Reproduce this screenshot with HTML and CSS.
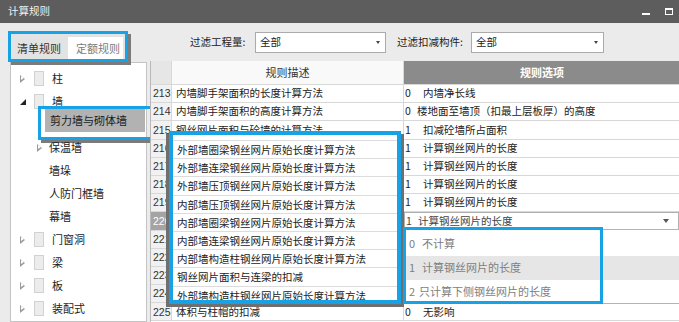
FILE: index.html
```html
<!DOCTYPE html>
<html lang="zh-CN">
<head>
  <meta charset="UTF-8" />
  <title>计算规则</title>
  <link rel="stylesheet" href="styles.css">
</head>
<body>

<div class="window">
  <header class="titlebar">
    <span class="title">计算规则</span>
    <span class="win-btns">
      <span class="btn-min"></span>
      <span class="btn-max"></span>
    </span>
  </header>

  <div class="content">
    <aside class="side">
      <div class="tabs">
        <span class="tab">清单规则</span>
        <span class="tab active">定额规则</span>
      </div>
      <ul class="tree">
        <li class="node"><i class="exp"></i><i class="doc"></i>柱</li>
        <li class="node"><i class="exp open"></i><i class="doc"></i>墙</li>
        <li class="node child selected"><span class="label">剪力墙与砌体墙</span></li>
        <li class="node child"><i class="exp"></i>保温墙</li>
        <li class="node child"><i class="exp none"></i>墙垛</li>
        <li class="node child"><i class="exp none"></i>人防门框墙</li>
        <li class="node child"><i class="exp none"></i>幕墙</li>
        <li class="node"><i class="exp"></i><i class="doc"></i>门窗洞</li>
        <li class="node"><i class="exp"></i><i class="doc"></i>梁</li>
        <li class="node"><i class="exp"></i><i class="doc"></i>板</li>
        <li class="node"><i class="exp"></i><i class="doc"></i>装配式</li>
      </ul>
    </aside>

    <section class="main">
      <div class="filters">
        <label class="f-label">过滤工程量:</label>
        <div class="combo combo-qty"><span>全部</span><i class="arrow"></i></div>
        <label class="f-label f-label2">过滤扣减构件:</label>
        <div class="combo combo-part"><span>全部</span><i class="arrow"></i></div>
      </div>

      <div class="grid">
        <div class="row head">
          <div class="cell num"></div>
          <div class="cell desc">规则描述</div>
          <div class="cell opt">规则选项</div>
        </div>
        <div class="row"><div class="cell num">213</div><div class="cell desc">内墙脚手架面积的长度计算方法</div><div class="cell opt"><span class="code">0</span>内墙净长线</div></div>
        <div class="row"><div class="cell num">214</div><div class="cell desc">内墙脚手架面积的高度计算方法</div><div class="cell opt"><span class="code tight">0</span>楼地面至墙顶（扣最上层板厚）的高度</div></div>
        <div class="row"><div class="cell num">215</div><div class="cell desc">钢丝网片面积与砼墙的计算方法</div><div class="cell opt"><span class="code">1</span>扣减砼墙所占面积</div></div>
        <!-- rows 216-224: descriptions shown in the callout above them -->
        <div class="row"><div class="cell num">216</div><div class="cell desc"></div><div class="cell opt"><span class="code">1</span>计算钢丝网片的长度</div></div>
        <div class="row"><div class="cell num">217</div><div class="cell desc"></div><div class="cell opt"><span class="code">1</span>计算钢丝网片的长度</div></div>
        <div class="row"><div class="cell num">218</div><div class="cell desc"></div><div class="cell opt"><span class="code">1</span>计算钢丝网片的长度</div></div>
        <div class="row"><div class="cell num">219</div><div class="cell desc"></div><div class="cell opt"><span class="code">1</span>计算钢丝网片的长度</div></div>
        <div class="row"><div class="cell num current">220</div><div class="cell desc"></div><div class="cell opt editing"><span class="code tight">1</span>计算钢丝网片的长度<i class="arrow"></i></div></div>
        <div class="row"><div class="cell num">221</div><div class="cell desc"></div><div class="cell opt"></div></div>
        <div class="row"><div class="cell num">222</div><div class="cell desc"></div><div class="cell opt"></div></div>
        <div class="row"><div class="cell num">223</div><div class="cell desc"></div><div class="cell opt"></div></div>
        <div class="row"><div class="cell num">224</div><div class="cell desc"></div><div class="cell opt"></div></div>
        <div class="row"><div class="cell num">225</div><div class="cell desc">体积与柱帽的扣减</div><div class="cell opt"><span class="code">0</span>无影响</div></div>

        <!-- highlighted rule descriptions -->
        <div class="callout callout-desc">
          <div class="c-row">外部墙圈梁钢丝网片原始长度计算方法</div>
          <div class="c-row">外部墙连梁钢丝网片原始长度计算方法</div>
          <div class="c-row">外部墙压顶钢丝网片原始长度计算方法</div>
          <div class="c-row">内部墙压顶钢丝网片原始长度计算方法</div>
          <div class="c-row">内部墙圈梁钢丝网片原始长度计算方法</div>
          <div class="c-row">内部墙连梁钢丝网片原始长度计算方法</div>
          <div class="c-row">内部墙构造柱钢丝网片原始长度计算方法</div>
          <div class="c-row">钢丝网片面积与连梁的扣减</div>
          <div class="c-row">外部墙构造柱钢丝网片原始长度计算方法</div>
        </div>

        <!-- option dropdown of row 220 -->
        <ul class="dropdown">
          <li><span class="code">0</span>不计算</li>
          <li class="hover"><span class="code">1</span>计算钢丝网片的长度</li>
          <li><span class="code tight">2</span>只计算下侧钢丝网片的长度</li>
        </ul>
        <div class="callout callout-opt"></div>
      </div>
    </section>
  </div>
</div>

</body>
</html>
```

FILE: styles.css
```css
/* Reset */
* {
  box-sizing: border-box;
  margin: 0;
  padding: 0;
}

html, body {
  width: 679px;
  height: 322px;
  overflow: hidden;
}

body {
  font-family: "Noto Sans CJK SC", "Noto Sans", sans-serif;
  font-size: 10.5px;
  line-height: 1.2;
  color: #222;
  background: #ebebeb;
}

.window {
  width: 679px;
  height: 322px;
  display: flex;
  flex-direction: column;
}

/* Title bar */
.titlebar {
  height: 23px;
  flex: none;
  background: #5d5d5d;
  color: #f0f0f0;
  display: flex;
  align-items: center;
  justify-content: space-between;
  padding: 0 6px 0 8px;
}

.win-btns {
  display: flex;
  align-items: center;
  gap: 15px;
}

.btn-min {
  width: 8px;
  height: 2px;
  background: #fff;
  margin-top: 5px;
}

.btn-max {
  width: 8px;
  height: 7px;
  border: 1px solid #fff;
  border-top-width: 2px;
}

.content {
  flex: 1;
  display: flex;
  min-height: 0;
}

/* Left side: tabs + tree */
.side {
  width: 150px;
  flex: none;
  padding-left: 8px;
  display: flex;
  flex-direction: column;
}

.tabs {
  margin-top: 8px;
  width: 120px;
  height: 31px;
  flex: none;
  border: 3px solid #17a2e6;
  box-shadow: 3px 3px 0 #7b7b7b;
  background: #e3e3e3;
  display: flex;
  align-items: flex-end;
  position: relative;
  z-index: 2;
}

.tab {
  width: 57px;
  height: 22px;
  line-height: 22px;
  padding-left: 6px;
  color: #333;
  font-size: 11px;
}

.tab.active {
  width: 55px;
  padding-left: 8px;
  background: #fff;
  color: #7c7c7c;
}

.tree {
  list-style: none;
  margin-left: 2px;
  width: 137px;
  flex: 1;
  background: #fff;
  border: 1px solid #c4c4c4;
  padding-top: 4px;
}

.node {
  height: 23px;
  display: flex;
  align-items: center;
  padding-left: 9px;
  font-size: 11px;
  color: #222;
  position: relative;
}

.node.child {
  padding-left: 26px;
}

.exp {
  width: 6px;
  height: 8px;
  flex: none;
  margin-right: 8px;
  position: relative;
}

.exp::before,
.exp::after {
  content: "";
  position: absolute;
  top: 0;
  left: 0;
  border-style: solid;
  border-color: transparent;
  border-width: 4px 0 4px 5px;
  border-left-color: #9a9a9a;
}

.exp::after {
  top: 1.3px;
  left: 1px;
  border-width: 2.7px 0 2.7px 3.3px;
  border-left-color: #fff;
}

.exp.open::before {
  top: 1px;
  border-width: 0 0 6px 6px;
  border-color: transparent transparent #222 transparent;
}

.exp.open::after,
.exp.none::before,
.exp.none::after {
  display: none;
}

.child .exp {
  margin-right: 6px;
}

.doc {
  width: 10px;
  height: 15px;
  flex: none;
  margin-right: 8px;
  background: #ececec;
  border: 1px solid #d2d2d2;
}

.node.selected {
  padding-left: 34px;
}

.node.selected .label {
  flex: 1;
  align-self: flex-start;
  height: 23px;
  margin-top: -4px;
  margin-right: 1px;
  padding: 5px 0 0 5px;
  background: #b2b2b2;
  color: #1a1a1a;
}

.node.selected::after {
  content: "";
  position: absolute;
  left: 27px;
  top: -7px;
  width: 109px;
  height: 28px;
  border: 3px solid #17a2e6;
  box-shadow: 3px 3px 0 #7b7b7b;
}

/* Right side: filters + grid */
.main {
  flex: 1;
  display: flex;
  flex-direction: column;
  min-width: 0;
}

.filters {
  height: 38px;
  flex: none;
  display: flex;
  align-items: center;
  padding-left: 40px;
}

.f-label {
  width: 65px;
  color: #222;
}

.f-label2 {
  margin-left: 11px;
  width: 74px;
}

.combo {
  height: 21px;
  background: #fff;
  border: 1px solid #ababab;
  display: flex;
  align-items: center;
  justify-content: space-between;
  padding: 0 5px 0 4px;
}

.combo-qty {
  width: 131px;
}

.combo-part {
  width: 133px;
}

.arrow {
  width: 0;
  height: 0;
  border-style: solid;
  border-width: 3px 2.5px 0 2.5px;
  border-color: #444 transparent transparent transparent;
}

.grid {
  flex: 1;
  background: #fff;
  position: relative;
  border-left: 1px solid #b9b9b9;
  overflow: hidden;
}

.row {
  display: grid;
  grid-template-columns: 21px 232px 1fr;
  height: 18.2px;
}

.row.head {
  height: 24px;
}

.cell {
  display: flex;
  align-items: center;
  white-space: nowrap;
  overflow: hidden;
  border-right: 1px solid #d8d8d8;
  border-bottom: 1px solid #d8d8d8;
  padding-left: 4px;
}

.cell.num {
  padding-left: 2px;
  background: #f1f1f1;
  font-family: "Liberation Sans", sans-serif;
  font-size: 10.5px;
  color: #333;
}

.cell.num.current {
  background: #a4a4a4;
  color: #fff;
}

.head .cell {
  justify-content: center;
  padding-left: 0;
  font-size: 11px;
}

.head .num {
  background: #e6e6e6;
}

.head .desc {
  background: #f9f9f9;
  color: #333;
}

.head .opt {
  background: #8b8b8b;
  color: #fff;
  font-weight: bold;
  border-right: none;
}

.cell.opt {
  padding-left: 1px;
  border-right: none;
}

.code {
  width: 18px;
  flex: none;
}

.code.tight {
  width: 12px;
}

.cell.editing {
  border: 1px solid #b0b0b0;
  color: #444;
  padding-right: 9px;
}

.cell.editing .arrow {
  margin-left: auto;
  border-width: 4px 3px 0 3px;
  border-top-color: #555;
}

/* Callouts */
.callout {
  position: absolute;
  border: 4px solid #17a2e6;
}

.callout-desc {
  left: 18px;
  top: 70px;
  width: 232px;
  height: 173px;
  background: #fff;
  box-shadow: -3px 3px 0 #6f6f6f, 3px 3px 0 #6f6f6f;
  padding-top: 5px;
  overflow: hidden;
  z-index: 3;
}

.c-row {
  height: 18.2px;
  line-height: 17px;
  padding-left: 4px;
  border-top: 1px solid #dcdcdc;
  white-space: nowrap;
}

.dropdown {
  position: absolute;
  left: 253px;
  top: 168px;
  right: 0;
  height: 75px;
  list-style: none;
  background: #fff;
  border: 1px solid #b3b3b3;
  border-right: none;
  padding-top: 2px;
  z-index: 4;
}

.dropdown li {
  height: 24px;
  display: flex;
  align-items: center;
  padding-left: 4px;
  color: #7e7e7e;
  font-size: 11px;
}

.dropdown .code {
  width: 13px;
}

.dropdown .code.tight {
  width: 10px;
}

.dropdown li.hover {
  background: #e6e6e6;
}

.callout-opt {
  left: 252px;
  top: 166px;
  width: 200px;
  height: 77px;
  border-width: 3px;
  z-index: 5;
}
```
